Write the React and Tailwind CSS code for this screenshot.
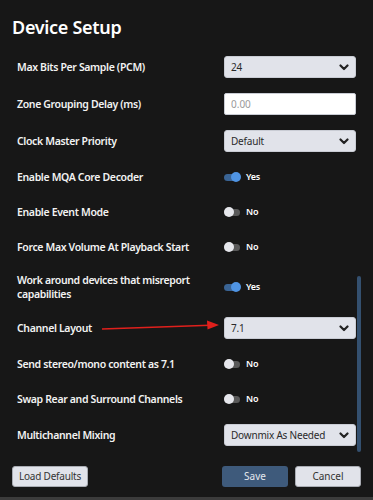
import { useState } from 'react';

const Chevron = () => (
  <svg width="10" height="7" viewBox="0 0 10 7" className="shrink-0">
    <polyline points="1.5,1.5 5,5 8.5,1.5" fill="none" stroke="#222" strokeWidth="2.2" strokeLinecap="round" strokeLinejoin="round" />
  </svg>
);

function Select({ value }) {
  return (
    <div className="flex items-center justify-between w-[132px] h-[22px] bg-[#e1e3ea] rounded-[3px] border border-[#c9ccd4] pl-[6px] pr-[6px] text-[10px] tracking-[-0.2px] text-[#2a2a2a]">
      <span>{value}</span>
      <Chevron />
    </div>
  );
}

function Toggle({ on }) {
  return (
    <div className="flex items-center gap-[4px] w-[132px]">
      <div className="relative w-[18px] h-[10px] flex items-center">
        <div className={`w-[16px] h-[7px] rounded-full ${on ? 'bg-[#3a6494]' : 'bg-[#595959]'}`} />
        <div
          className={`absolute top-0 w-[10px] h-[10px] rounded-full ${on ? 'left-[7px] bg-[#4f94e3]' : 'left-0 bg-[#e6e7ec]'}`}
        />
      </div>
      <span className="text-[9px] font-semibold tracking-[-0.2px] text-white">{on ? 'Yes' : 'No'}</span>
    </div>
  );
}

function Row({ label, h, children }) {
  return (
    <div className={`flex items-center justify-between pl-[5px] pr-[5px] ${h}`}>
      <span className="text-[10.5px] font-semibold tracking-[-0.35px] text-[#f2f2f2] leading-[14px] w-[180px]">{label}</span>
      {children}
    </div>
  );
}

export default function App() {
  const [delay] = useState('');

  return (
    <div
      className="relative w-[373px] h-[500px] bg-[#171717] overflow-hidden border-b-[3px] border-[#3b3b3b]"
      style={{ fontFamily: '"Noto Sans", "Open Sans", sans-serif' }}
    >
      <div className="px-3">
        <h1 className="pt-[15px] h-[48.5px] text-[18px] font-semibold tracking-[-0.3px] text-white leading-[24px]">Device Setup</h1>

        <Row label="Max Bits Per Sample (PCM)" h="h-[37px]">
          <Select value="24" />
        </Row>
        <Row label="Zone Grouping Delay (ms)" h="h-[37px]">
          <input
            readOnly
            value={delay}
            placeholder="0.00"
            className="w-[132px] h-[22px] bg-white rounded-[2px] border border-[#c9ccd4] px-[6px] text-[10px] text-[#222] placeholder-[#9a9a9a] outline-none"
          />
        </Row>
        <Row label="Clock Master Priority" h="h-[37px]">
          <Select value="Default" />
        </Row>
        <Row label="Enable MQA Core Decoder" h="h-[35px]">
          <Toggle on />
        </Row>
        <Row label="Enable Event Mode" h="h-[35px]">
          <Toggle />
        </Row>
        <Row label="Force Max Volume At Playback Start" h="h-[35px]">
          <Toggle />
        </Row>
        <Row label="Work around devices that misreport capabilities" h="h-[45px]">
          <Toggle on />
        </Row>
        <Row label="Channel Layout" h="h-[37px]">
          <Select value="7.1" />
        </Row>
        <Row label="Send stereo/mono content as 7.1" h="h-[35px]">
          <Toggle />
        </Row>
        <Row label="Swap Rear and Surround Channels" h="h-[35px]">
          <Toggle />
        </Row>
        <Row label="Multichannel Mixing" h="h-[37px]">
          <Select value="Downmix As Needed" />
        </Row>

        <div className="flex items-center justify-between mt-[12px]">
          <button className="w-[76px] h-[21px] bg-[#e1e3ea] border border-[#a9acb3] rounded-[3px] text-[10px] tracking-[-0.2px] text-[#333]">
            Load Defaults
          </button>
          <div className="flex gap-[7px]">
            <button className="w-[66px] h-[21px] bg-[#3e5a7b] rounded-[3px] text-[10px] text-[#e4e8ee]">Save</button>
            <button className="w-[66px] h-[21px] bg-[#e1e3ea] border border-[#a9acb3] rounded-[3px] text-[10px] text-[#333]">
              Cancel
            </button>
          </div>
        </div>
      </div>

      {/* scrollbar thumb */}
      <div className="absolute left-[357px] top-[276px] w-[4px] h-[176px] rounded-full bg-[#34506f]" />

      {/* annotation arrow */}
      <svg className="absolute left-0 top-0 pointer-events-none" width="373" height="500">
        <line x1="102" y1="329" x2="210" y2="325.3" stroke="#e0201c" strokeWidth="1.5" />
        <polygon points="219,325 207,320.5 207.5,329.5" fill="#e0201c" />
      </svg>
    </div>
  );
}
